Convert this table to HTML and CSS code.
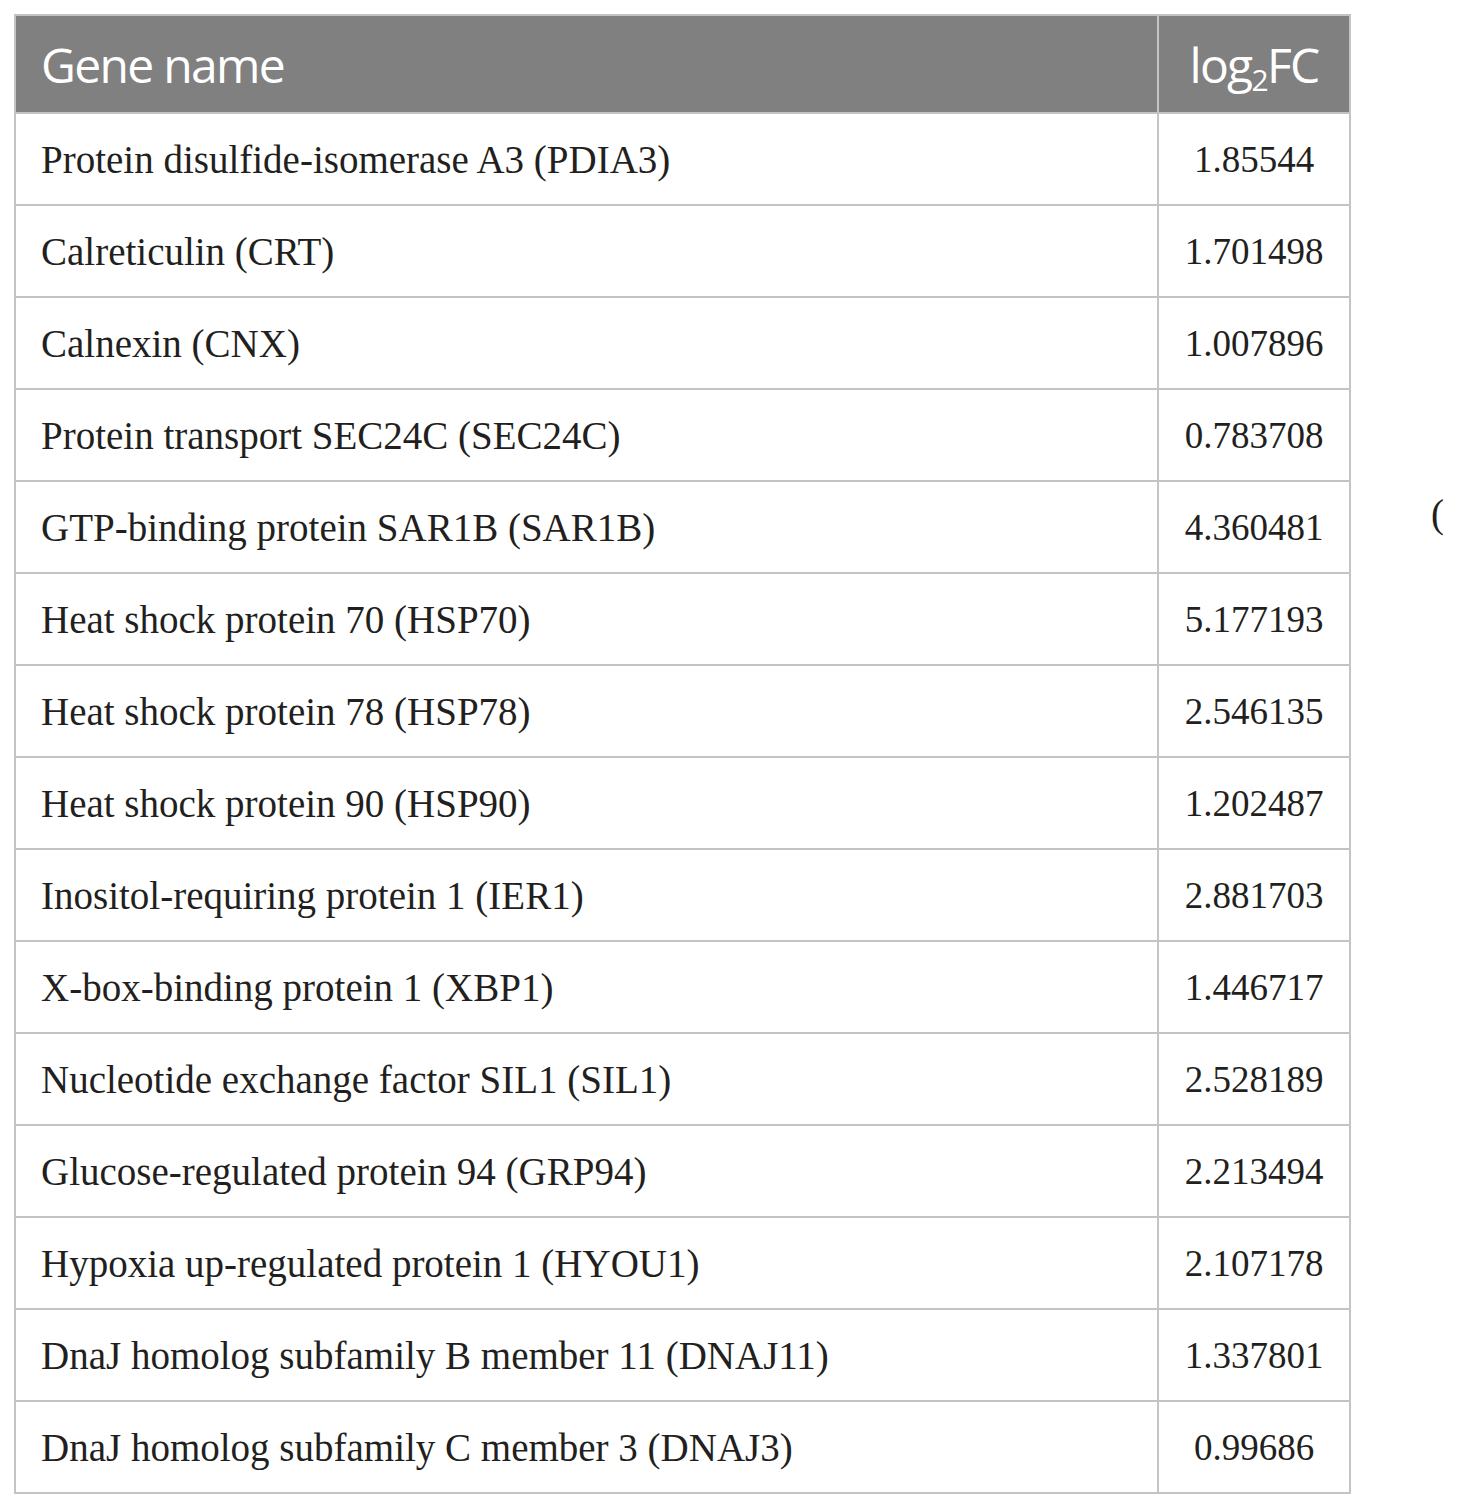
FILE: index.html
```html
<!DOCTYPE html>
<html>
<head>
<meta charset="utf-8">
<link rel="stylesheet" href="styles.css">
</head>
<body>
<div class="page">
<table class="genes">
<thead>
<tr><th class="name">Gene name</th><th class="fc">log<sub>2</sub>FC</th></tr>
</thead>
<tbody>
<tr><td class="name">Protein disulfide-isomerase A3 (PDIA3)</td><td class="fc">1.85544</td></tr>
<tr><td class="name">Calreticulin (CRT)</td><td class="fc">1.701498</td></tr>
<tr><td class="name">Calnexin (CNX)</td><td class="fc">1.007896</td></tr>
<tr><td class="name">Protein transport SEC24C (SEC24C)</td><td class="fc">0.783708</td></tr>
<tr><td class="name">GTP-binding protein SAR1B (SAR1B)</td><td class="fc">4.360481</td></tr>
<tr><td class="name">Heat shock protein 70 (HSP70)</td><td class="fc">5.177193</td></tr>
<tr><td class="name">Heat shock protein 78 (HSP78)</td><td class="fc">2.546135</td></tr>
<tr><td class="name">Heat shock protein 90 (HSP90)</td><td class="fc">1.202487</td></tr>
<tr><td class="name">Inositol-requiring protein 1 (IER1)</td><td class="fc">2.881703</td></tr>
<tr><td class="name">X-box-binding protein 1 (XBP1)</td><td class="fc">1.446717</td></tr>
<tr><td class="name">Nucleotide exchange factor SIL1 (SIL1)</td><td class="fc">2.528189</td></tr>
<tr><td class="name">Glucose-regulated protein 94 (GRP94)</td><td class="fc">2.213494</td></tr>
<tr><td class="name">Hypoxia up-regulated protein 1 (HYOU1)</td><td class="fc">2.107178</td></tr>
<tr><td class="name">DnaJ homolog subfamily B member 11 (DNAJ11)</td><td class="fc">1.337801</td></tr>
<tr><td class="name">DnaJ homolog subfamily C member 3 (DNAJ3)</td><td class="fc">0.99686</td></tr>
</tbody>
</table>
<span class="paren">(</span>
</div>
</body>
</html>
```
FILE: styles.css
```css
html, body {
  margin: 0;
  padding: 0;
  background: #ffffff;
}
.page {
  display: flex;
  align-items: flex-start;
  padding: 14px 0 0 14px;
}
.genes {
  border-collapse: collapse;
  width: 1337px;
  table-layout: fixed;
}
.genes th, .genes td {
  border: 2px solid #c4c4c4;
  padding: 0 0 0 25px;
}
.genes th {
  background: #808080;
  color: #ffffff;
  font-family: "Open Sans", sans-serif;
  font-weight: 400;
  font-size: 48px;
  height: 96px;
  text-align: left;
  letter-spacing: -1.7px;
}
.genes th.fc {
  width: 190px;
  padding: 0;
  text-align: center;
}
.genes th sub {
  font-size: 30px;
  vertical-align: -8px;
  line-height: 0;
}
.genes td {
  font-family: "Liberation Serif", "DejaVu Serif", serif;
  font-size: 39px;
  color: #231f20;
  height: 90px;
}
.genes td.fc {
  padding: 0;
  text-align: center;
  font-size: 37px;
}
.paren {
  font-family: "Liberation Serif", serif;
  font-size: 39px;
  color: #231f20;
  margin: 477px 0 0 80px;
}
```
